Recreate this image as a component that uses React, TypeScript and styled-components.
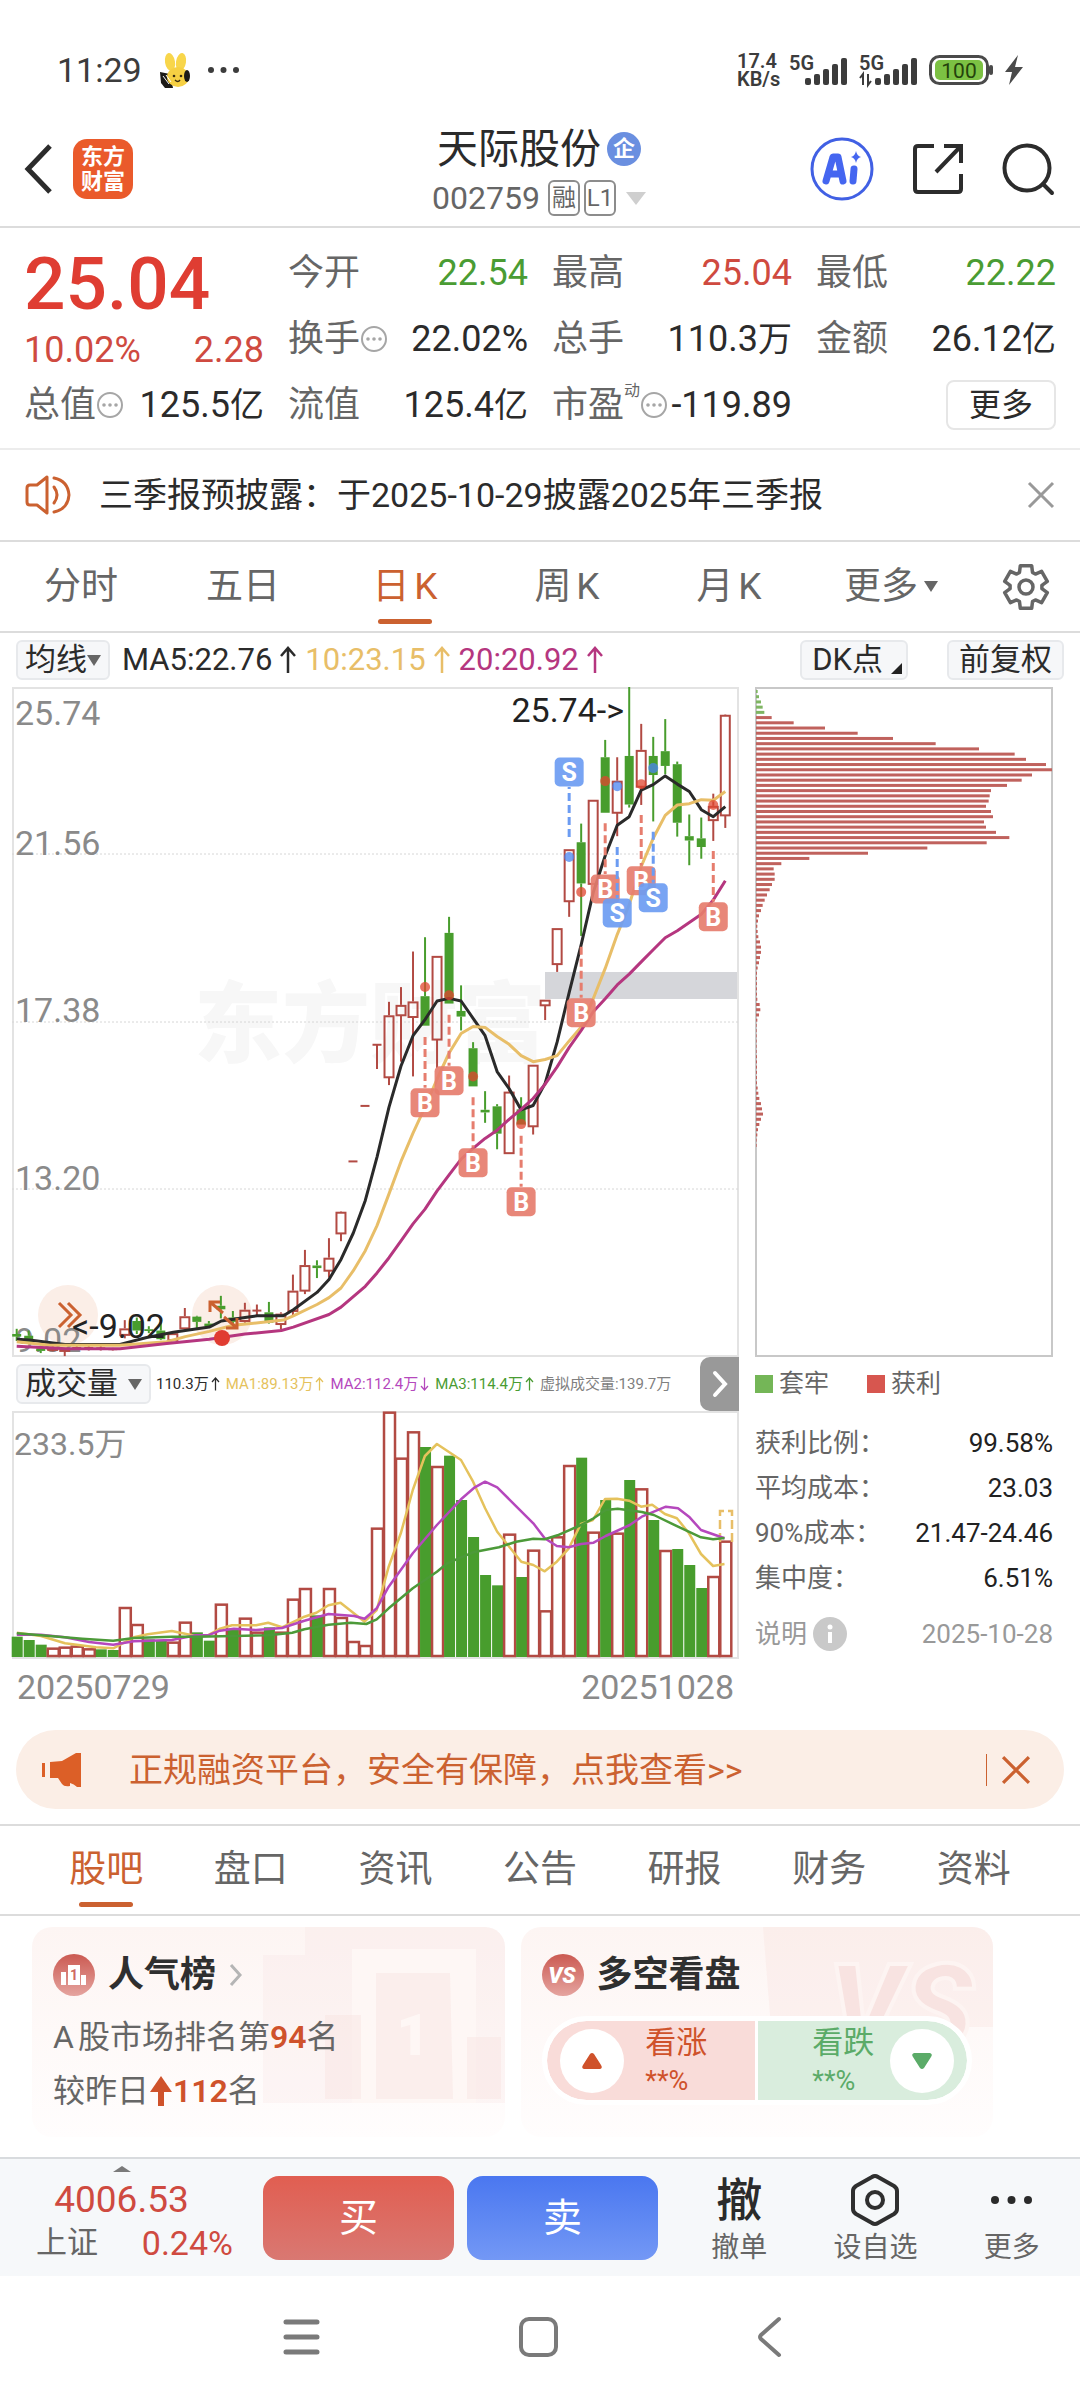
import React from "react";
import styled, { createGlobalStyle, css } from "styled-components";

const c = {
  text: "#2b2b2b",
  label: "#666",
  muted: "#8a8a8a",
  line: "#dcdcdc",
  orange: "#cb6130",
  red: "#cf4a40",
  green: "#4a9c33",
  candleRed: "#b24a43",
  candleGreen: "#489d2d",
  ma5: "#2a2a2a",
  ma10: "#e8be68",
  ma20: "#b5367f",
  violet: "#b548bd",
};

const Global = createGlobalStyle`
  * { box-sizing: border-box; }
  body {
    margin: 0;
    background: #fff;
    color: ${c.text};
    font-family: Roboto, "Noto Sans CJK SC", sans-serif;
  }
  button {
    margin: 0;
    padding: 0;
    border: 0;
    background: none;
    color: inherit;
    font: inherit;
    white-space: nowrap;
    cursor: pointer;
  }
  svg { display: block; flex: none; overflow: visible; }
`;

const Page = styled.div`
  display: flex;
  flex-direction: column;
  width: 100%;
`;

/* ---------- status bar ---------- */

const StatusBar = styled.div`
  display: flex;
  align-items: center;
  justify-content: space-between;
  height: 108px;
  padding: 32px 57px 0 57px;
  color: #3c3c3c;
`;

const StatusGroup = styled.div`
  display: flex;
  align-items: center;
  gap: ${(p: { $gap: number }) => p.$gap}px;
`;

const Clock = styled.span`
  font-size: 34px;
  line-height: 40px;
`;

const Speed = styled.span`
  display: flex;
  flex-direction: column;
  width: 42px;
  font-size: 20px;
  font-weight: 600;
  line-height: 18px;
`;

const RabbitIcon = () => (
  <svg width="32" height="36" viewBox="0 0 32 36">
    <path d="M1 20l10 2 3 14H6L2 31z" fill="#1c1a17" />
    <ellipse cx="11" cy="10" rx="5" ry="9" fill="#f8d64b" transform="rotate(-9 11 10)" />
    <ellipse cx="22" cy="10" rx="5" ry="9" fill="#f8d64b" transform="rotate(9 22 10)" />
    <ellipse cx="19" cy="25" rx="11" ry="10" fill="#f6d043" />
    <ellipse cx="28" cy="24" rx="3" ry="6" fill="#1c1a17" />
    <circle cx="15" cy="24" r="1.3" fill="#3a2c10" />
    <circle cx="22" cy="24" r="1.3" fill="#3a2c10" />
    <path d="M16 28q3 3 5 0" stroke="#3a2c10" strokeWidth="1.4" fill="none" />
    <path d="M4 24l6 8M7 23l5 7" stroke="#fff" strokeWidth="1" />
  </svg>
);

const DotsIcon = ({ size, r, fill }: { size: number; r: number; fill: string }) => (
  <svg width={size} height={r * 2 + 2} viewBox={`0 0 ${size} ${r * 2 + 2}`} fill={fill}>
    <circle cx={r} cy={r + 1} r={r} />
    <circle cx={size / 2} cy={r + 1} r={r} />
    <circle cx={size - r} cy={r + 1} r={r} />
  </svg>
);

const SignalIcon = ({ data }: { data?: boolean }) => (
  <svg width="60" height="34" viewBox="0 0 60 34" fill="#3c3c3c">
    <text x="0" y="17" fontSize="20" fontWeight="600" fontFamily="Roboto, sans-serif">
      5G
    </text>
    {[7, 11, 16, 21, 27].map((h, i) => (
      <rect key={h} x={16 + i * 9} y={32 - h} width="6" height={h} rx="2" />
    ))}
    {data && (
      <path d="M4 32V21L1 25M9 21v11l3-4" stroke="#3c3c3c" strokeWidth="2" fill="none" />
    )}
  </svg>
);

const BatteryIcon = () => (
  <svg width="66" height="30" viewBox="0 0 66 30">
    <rect x="1.5" y="1.5" width="57" height="27" rx="9" fill="none" stroke="#4a4a4a" strokeWidth="3" />
    <rect x="6" y="5" width="48" height="20" rx="5" fill="#7cc143" />
    <path d="M62 12v6" stroke="#4a4a4a" strokeWidth="4" strokeLinecap="round" />
    <text x="30" y="23" fontSize="21" textAnchor="middle" fill="#24420c" fontFamily="Roboto, sans-serif">
      100
    </text>
  </svg>
);

const BoltIcon = () => (
  <svg width="18" height="30" viewBox="0 0 18 30" fill="#4a4a4a">
    <path d="M13 0L0 17h7L4 30 18 12h-8z" />
  </svg>
);

/* ---------- header ---------- */

const Header = styled.header`
  display: grid;
  grid-template-columns: 1fr auto 1fr;
  align-items: center;
  height: 120px;
  padding: 4px 26px 0 24px;
  border-bottom: 2px solid ${c.line};
`;

const HeaderSide = styled.div`
  display: flex;
  align-items: center;
  gap: ${(p: { $gap: number; $end?: boolean }) => p.$gap}px;
  justify-content: ${(p) => (p.$end ? "flex-end" : "flex-start")};
`;

const Logo = styled.div`
  display: flex;
  flex-direction: column;
  justify-content: center;
  width: 60px;
  height: 60px;
  border-radius: 14px;
  background: #ea5a2b;
  color: #fff;
  font-size: 22px;
  font-weight: 700;
  line-height: 25px;
  text-align: center;
`;

const TitleBlock = styled.div`
  display: flex;
  flex-direction: column;
  align-items: center;
  padding-top: 8px;
`;

const TitleLine = styled.h1`
  display: flex;
  align-items: center;
  gap: 6px;
  margin: 0;
  font-size: 41px;
  font-weight: 400;
  line-height: 50px;
`;

const CompanyBadge = styled.span`
  width: 34px;
  height: 34px;
  border-radius: 50%;
  background: #6a8fe0;
  color: #fff;
  font-size: 22px;
  font-weight: 700;
  line-height: 33px;
  text-align: center;
`;

const CodeLine = styled.div`
  display: flex;
  align-items: center;
  gap: 4px;
  color: ${c.label};
  font-size: 32px;
  line-height: 48px;
`;

const Tag = styled.span`
  width: 32px;
  height: 36px;
  margin-left: ${(p: { $first?: boolean }) => (p.$first ? 4 : 0)}px;
  border: 2px solid #8c8c8c;
  border-radius: 6px;
  font-size: 24px;
  line-height: 32px;
  text-align: center;
`;

const Caret = styled.span<{ $w: number; $h: number; $color: string; $up?: boolean; $ml?: number }>`
  flex: none;
  width: 0;
  height: 0;
  margin-left: ${(p) => p.$ml ?? 0}px;
  border-left: ${(p) => p.$w / 2}px solid transparent;
  border-right: ${(p) => p.$w / 2}px solid transparent;
  ${(p) =>
    p.$up
      ? css`border-bottom: ${p.$h}px solid ${p.$color};`
      : css`border-top: ${p.$h}px solid ${p.$color};`}
`;

const BackIcon = () => (
  <svg width="28" height="50" viewBox="0 0 28 50" fill="none" stroke="#2c2c2c" strokeWidth="5">
    <path d="M26 2L4 25l22 23" />
  </svg>
);

const AiIcon = () => (
  <svg width="64" height="64" viewBox="0 0 64 64">
    <circle cx="32" cy="32" r="30" fill="#fff" stroke="#4160e4" strokeWidth="3" />
    <g fill="none" stroke="#4566f0" strokeWidth="7" strokeLinecap="round" strokeLinejoin="round">
      <path d="M16 44l7-24h5l5 24M20 37h11" />
      <path d="M44 32l-1 12" />
    </g>
    <path d="M46 14q1 5 5 6-4 1-5 6-1-5-5-6 4-1 5-6z" fill="#4566f0" />
  </svg>
);

const ShareIcon = () => (
  <svg width="52" height="52" viewBox="0 0 52 52" fill="none" stroke="#2c2c2c" strokeWidth="4">
    <path d="M22 3H6Q3 3 3 6v40q0 3 3 3h40q3 0 3-3V31" />
    <path d="M32 3h17v17M49 3L24 29" />
  </svg>
);

const SearchIcon = () => (
  <svg width="52" height="52" viewBox="0 0 52 52" fill="none" stroke="#2c2c2c" strokeWidth="4" strokeLinecap="round">
    <circle cx="25" cy="25" r="22.5" />
    <path d="M41 41l9 9" />
  </svg>
);

/* ---------- quote ---------- */

const Quote = styled.section`
  display: grid;
  grid-template-columns: repeat(4, 1fr);
  grid-auto-rows: 66px;
  column-gap: 24px;
  padding: 12px 24px 10px;
  border-bottom: 2px solid #ececec;
`;

const PriceBlock = styled.div`
  grid-row: span 2;
  display: flex;
  flex-direction: column;
  color: ${c.red};
`;

const Price = styled.strong`
  color: #df3d32;
  font-size: 73px;
  font-weight: 500;
  line-height: 88px;
`;

const Row = styled.div`
  display: flex;
  align-items: center;
  justify-content: space-between;
  white-space: nowrap;
`;

const QuoteValue = styled.span<{ $tone?: "up" | "down" }>`
  color: ${(p) => (p.$tone === "up" ? c.red : p.$tone === "down" ? c.green : c.text)};
  font-size: 36px;
  line-height: 44px;
`;

const Unit = styled.span`
  font-size: 34px;
`;

const QuoteLabel = styled.span`
  display: flex;
  align-items: center;
  color: ${c.label};
  font-size: 36px;
  line-height: 44px;
`;

const Mode = styled.sup`
  align-self: flex-start;
  font-size: 16px;
  line-height: 16px;
`;

const MoreBox = styled.button`
  align-self: center;
  justify-self: end;
  width: 110px;
  height: 50px;
  border: 2px solid #e6e6e6;
  border-radius: 8px;
  font-size: 32px;
  line-height: 44px;
`;

const HintIcon = () => (
  <svg width="28" height="28" viewBox="0 0 28 28">
    <circle cx="14" cy="14" r="12" fill="none" stroke="#a6a6a6" strokeWidth="2" />
    <g fill="#a6a6a6">
      <circle cx="8" cy="14" r="1.8" />
      <circle cx="14" cy="14" r="1.8" />
      <circle cx="20" cy="14" r="1.8" />
    </g>
  </svg>
);

type Cell = {
  label: string;
  value: string;
  unit?: string;
  tone?: "up" | "down";
  hint?: boolean;
  mode?: string;
};

const QuoteCell = ({ label, value, unit, tone, hint, mode }: Cell) => (
  <Row>
    <QuoteLabel>
      {label}
      {mode && <Mode>{mode}</Mode>}
      {hint && <HintIcon />}
    </QuoteLabel>
    <QuoteValue $tone={tone}>
      {value}
      {unit && <Unit>{unit}</Unit>}
    </QuoteValue>
  </Row>
);

/* ---------- notice ---------- */

const Notice = styled.section`
  display: flex;
  align-items: center;
  gap: 27px;
  height: 92px;
  padding: 0 26px;
  border-bottom: 2px solid ${c.line};
  font-size: 34px;
  line-height: 44px;
`;

const Grow = styled.span`
  flex: 1;
`;

const SpeakerIcon = () => (
  <svg width="46" height="40" viewBox="0 0 46 40" fill="none" stroke={c.orange} strokeWidth="3" strokeLinecap="round" strokeLinejoin="round">
    <path d="M21 2L11 10H4q-3 0-3 3v14q0 3 3 3h7l10 8z" />
    <path d="M28 12q6 8 0 16" />
    <path d="M28 3q14 3 15 17-1 14-15 17" />
  </svg>
);

const CloseIcon = ({ size, color }: { size: number; color: string }) => (
  <svg width={size} height={size} viewBox="0 0 26 26" stroke={color} strokeWidth="3">
    <path d="M1 1l24 24M25 1L1 25" />
  </svg>
);

/* ---------- tabs ---------- */

const Tabs = styled.nav<{ $info?: boolean }>`
  display: flex;
  height: ${(p) => (p.$info ? 92 : 91)}px;
  padding: 0 ${(p) => (p.$info ? 34 : 0)}px;
  border-top: ${(p) => (p.$info ? 2 : 0)}px solid ${c.line};
  border-bottom: 2px solid ${c.line};
`;

const Tab = styled.button<{ $active?: boolean }>`
  position: relative;
  flex: 1;
  display: flex;
  align-items: center;
  justify-content: center;
  color: ${(p) => (p.$active ? c.orange : c.label)};
  font-size: 37px;
  line-height: 48px;
  text-autospace: normal;
  ${(p) =>
    p.$active &&
    css`
      &::after {
        content: "";
        position: absolute;
        bottom: 7px;
        left: calc(50% - 27px);
        width: 54px;
        height: 5px;
        border-radius: 3px;
        background: ${c.orange};
      }
    `}
`;

const GearButton = styled.button`
  display: flex;
  align-items: center;
  justify-content: center;
  width: 108px;
`;

const gearOutline = [0, 60, 120, 180, 240, 300]
  .flatMap((deg) =>
    [[16, -24], [22, -15], [22, 15], [16, 24]].map(([r, d]) => {
      const a = ((deg + d - 90) * Math.PI) / 180;
      return `${(23 + r * Math.cos(a)).toFixed(1)},${(24 + r * Math.sin(a)).toFixed(1)}`;
    }),
  )
  .join(" ");

const GearIcon = () => (
  <svg width="46" height="48" viewBox="0 0 46 48" fill="none" stroke="#666" strokeWidth="3.500" strokeLinejoin="round">
    <polygon points={gearOutline} />
    <circle cx="23" cy="24" r="7" />
  </svg>
);

/* ---------- indicator bar ---------- */

const IndicatorBar = styled.div`
  display: flex;
  align-items: center;
  gap: 12px;
  height: 54px;
  padding: 0 16px;
`;

const Chip = styled.button<{ $wide?: boolean }>`
  flex: none;
  display: flex;
  align-items: center;
  height: 40px;
  padding: 0 ${(p) => (p.$wide ? 10 : 7)}px;
  border: 2px solid #e7e9ec;
  border-radius: 6px;
  background: #f6f7f9;
  font-size: 31px;
  line-height: 36px;
`;

const ChipGroup = styled.div`
  display: flex;
  gap: 39px;
`;

const Corner = styled.span`
  align-self: flex-end;
  width: 0;
  height: 0;
  margin: 0 -6px 4px 8px;
  border-bottom: 11px solid #222;
  border-left: 11px solid transparent;
`;

const Readings = styled.div`
  flex: 1;
  display: flex;
  gap: 8px;
  font-size: 31px;
  line-height: 40px;
`;

const Reading = styled.span<{ $color: string; $gap?: number }>`
  display: flex;
  align-items: center;
  gap: ${(p) => p.$gap ?? 7}px;
  color: ${(p) => p.$color};
  white-space: nowrap;
`;

const Arrow = ({ down, w = 18, h = 28 }: { down?: boolean; w?: number; h?: number }) => (
  <svg width={w} height={h} viewBox="0 0 18 28" fill="none" stroke="currentColor" strokeWidth="2.500">
    <path d={down ? "M9 1v25M2 18l7 8 7-8" : "M9 27V2M2 10l7-8 7 8"} />
  </svg>
);

/* ---------- charts ---------- */

const Charts = styled.section`
  display: grid;
  grid-template-columns: 727fr 298fr;
  column-gap: 16px;
  padding: 0 27px 0 12px;
`;

const Column = styled.div`
  display: flex;
  flex-direction: column;
  min-width: 0;
`;

const Plot = styled.svg`
  width: 100%;
  height: auto;
`;

const VolumeBar = styled.div`
  display: flex;
  align-items: center;
  gap: 5px;
  height: 54px;
  padding-left: 4px;
`;

const VolumeReadings = styled.div`
  flex: 1;
  display: flex;
  gap: 6px;
  font-size: 15px;
  line-height: 24px;
`;

const Expand = styled.button`
  flex: none;
  display: flex;
  align-items: center;
  justify-content: center;
  width: 39px;
  height: 54px;
  border-radius: 10px 0 0 10px;
  background: #999;
`;

const DateRow = styled.div`
  display: flex;
  justify-content: space-between;
  padding: 0 5px;
  color: ${c.muted};
  font-size: 34px;
  line-height: 56px;
`;

const Legend = styled.div`
  display: flex;
  align-items: center;
  gap: 38px;
  height: 54px;
  color: ${c.label};
  font-size: 25px;
  line-height: 36px;
`;

const LegendItem = styled.span`
  display: flex;
  align-items: center;
  gap: 6px;
`;

const Swatch = styled.i<{ $color: string }>`
  width: 18px;
  height: 18px;
  background: ${(p) => p.$color};
`;

const Costs = styled.dl`
  margin: 0;
  padding-top: 9px;
  font-size: 26px;
  line-height: 36px;
`;

const CostRow = styled.div`
  display: flex;
  align-items: center;
  justify-content: space-between;
  height: 45px;
  white-space: nowrap;
  dt { color: ${c.label}; }
  dd { margin: 0; color: #222; }
`;

const CostFoot = styled.div`
  display: flex;
  align-items: center;
  justify-content: space-between;
  height: 68px;
  color: #999;
  font-size: 26px;
  line-height: 36px;
`;

const Explain = styled.button`
  display: flex;
  align-items: center;
  gap: 6px;
`;

// Vertical plot units run from the top edge (16) to the bottom edge (1559).
const UNIT = 2.306;
const ky = (v: number) => (v - 16) / UNIT;
const kx = (i: number) => 4.7 + i * 12.01;

type Candle = ["r" | "g", number, number, number, number];

const candles: Candle[] = [
  ["g", 1496, 1508, 1514, 1524], ["g", 1500, 1512, 1528, 1530], ["g", 1535, 1541, 1547, 1552],
  ["r", 1536, 1540, 1544, 1548], ["r", 1540, 1542, 1547, 1559], ["r", 1536, 1540, 1540, 1544],
  ["r", 1536, 1540, 1540, 1546], ["r", 1536, 1541, 1541, 1546], ["r", 1540, 1543, 1543, 1546],
  ["r", 1476, 1495, 1510, 1518], ["g", 1470, 1478, 1500, 1508], ["g", 1490, 1497, 1501, 1506],
  ["g", 1482, 1500, 1520, 1522], ["r", 1502, 1506, 1522, 1524], ["r", 1448, 1467, 1495, 1498],
  ["g", 1466, 1468, 1480, 1494], ["g", 1478, 1484, 1490, 1494], ["g", 1420, 1443, 1451, 1472],
  ["g", 1455, 1470, 1480, 1496], ["r", 1436, 1452, 1478, 1482], ["r", 1440, 1454, 1454, 1466],
  ["g", 1434, 1458, 1482, 1484], ["r", 1458, 1461, 1485, 1498], ["r", 1371, 1408, 1455, 1468],
  ["r", 1314, 1349, 1408, 1416], ["g", 1338, 1350, 1356, 1379], ["r", 1287, 1332, 1362, 1378],
  ["r", 1225, 1226, 1276, 1294], ["r", 1110, 1110, 1110, 1110], ["r", 982, 982, 982, 982],
  ["r", 841, 841, 841, 897], ["r", 742, 773, 916, 934], ["r", 708, 749, 773, 880],
  ["r", 626, 741, 777, 914], ["g", 593, 729, 797, 797], ["r", 636, 636, 829, 895],
  ["g", 546, 583, 746, 746], ["g", 704, 763, 776, 808], ["g", 835, 849, 937, 937],
  ["g", 948, 991, 997, 1021], ["g", 978, 983, 1046, 1082], ["r", 912, 949, 1091, 1091],
  ["g", 962, 990, 1025, 1025], ["r", 887, 887, 1029, 1048], ["r", 737, 737, 750, 784],
  ["r", 572, 572, 655, 673], ["r", 390, 390, 510, 546], ["g", 331, 374, 469, 590],
  ["r", 276, 276, 470, 470], ["g", 138, 178, 306, 306], ["r", 178, 232, 306, 360],
  ["g", 16, 175, 287, 294], ["r", 101, 161, 246, 288], ["g", 131, 175, 219, 326],
  ["g", 90, 164, 198, 217], ["g", 188, 194, 329, 361], ["g", 310, 360, 370, 427],
  ["g", 317, 365, 385, 412], ["r", 262, 290, 323, 371], ["r", 79, 80, 312, 341],
];

type Point = [number, number];
// Averages from the 31st bar on carry one value per bar.
const tail = (values: number[]): Point[] => values.map((v, k) => [1131 + k * 36.03, v]);

const ma5: Point[] = [
  [50, 1520], [88, 1522], [195, 1532], [360, 1532], [440, 1516], [520, 1504], [628, 1492], [664, 1478],
  [735, 1470], [771, 1466], [850, 1466], [880, 1452], [951, 1412], [987, 1382], [1023, 1336], [1060, 1275],
  [1096, 1200],
  ...tail([1100, 985, 890, 820, 783, 740, 734, 740, 780, 820, 903, 942, 991, 981, 930, 835, 720, 610, 490, 405, 335, 315, 254, 241, 221, 240, 257, 299, 315, 292]),
];
const ma10: Point[] = [
  [50, 1526], [150, 1534], [360, 1534], [500, 1526], [556, 1514], [628, 1502], [700, 1488], [850, 1476],
  [880, 1466], [951, 1440], [987, 1424], [1023, 1402], [1060, 1362], [1096, 1316],
  ...tail([1258, 1185, 1110, 1045, 985, 920, 860, 815, 799, 801, 822, 840, 866, 880, 875, 866, 832, 800, 735, 665, 587, 518, 430, 365, 312, 288, 285, 276, 277, 257]),
];
const ma20: Point[] = [
  [50, 1536], [200, 1542], [360, 1542], [500, 1530], [628, 1520], [735, 1508], [844, 1500], [880, 1492],
  [987, 1463], [1023, 1446], [1096, 1398],
  ...tail([1367, 1332, 1293, 1254, 1220, 1178, 1141, 1105, 1080, 1057, 1038, 1013, 990, 965, 932, 892, 847, 808, 765, 735, 703, 678, 650, 622, 594, 578, 559, 540, 507, 463]),
];

const priceLine = (pts: Point[]) =>
  pts.map(([x, y]) => `${((x - 36) / 3).toFixed(1)},${ky(y).toFixed(1)}`).join(" ");

type Trade = { i: number; kind: "B" | "S"; dot: number; from: number; box: number };
const trades: Trade[] = [
  { i: 34, kind: "B", dot: 708, from: 823, box: 975 },
  { i: 36, kind: "B", dot: 727, from: 772, box: 924 },
  { i: 38, kind: "B", dot: 914, from: 962, box: 1113 },
  { i: 42, kind: "B", dot: 1024, from: 1051, box: 1203 },
  { i: 46, kind: "S", dot: 408, from: 362, box: 212 },
  { i: 47, kind: "B", dot: 489, from: 615, box: 767 },
  { i: 49, kind: "B", dot: 233, from: 330, box: 482 },
  { i: 50, kind: "S", dot: 245, from: 385, box: 537 },
  { i: 52, kind: "B", dot: 240, from: 311, box: 463 },
  { i: 53, kind: "S", dot: 203, from: 350, box: 502 },
  { i: 58, kind: "B", dot: 288, from: 394, box: 546 },
];

const numFont = 'Roboto, "Noto Sans CJK SC", sans-serif';

const CandleMark = ({ d, i }: { d: Candle; i: number }) => {
  const [kind, high, top, bottom, low] = d;
  const x = kx(i);
  const red = kind === "r";
  const color = red ? c.candleRed : c.candleGreen;
  const flat = bottom === top;
  return (
    <g stroke={color} strokeWidth="2">
      {high < top && <line x1={x} x2={x} y1={ky(high)} y2={ky(top)} />}
      {low > bottom && <line x1={x} x2={x} y1={ky(bottom)} y2={ky(low)} />}
      {flat ? (
        <line x1={x - 4.5} x2={x + 4.5} y1={ky(top)} y2={ky(top)} />
      ) : red ? (
        <rect x={x - 4.5} y={ky(top) + 1} width="9" height={Math.max(1, ky(bottom) - ky(top) - 1)} fill="none" />
      ) : (
        <rect x={x - 4.5} y={ky(top)} width="9" height={ky(bottom) - ky(top)} fill={color} stroke="none" />
      )}
    </g>
  );
};

const PriceChart = () => (
  <Plot viewBox="0 0 727 670" fontFamily={numFont}>
    <text x="182" y="368" fontSize="88" fontWeight="900" fill="#f7f7f7">
      东方财富
    </text>
    <rect x="533" y="285" width="194" height="27" fill="#d5d6da" />
    <rect x="1" y="1" width="725" height="668" fill="none" stroke="#e3e3e3" strokeWidth="2" />
    {[167, 335, 502].map((y) => (
      <line key={y} x1="0" x2="727" y1={y} y2={y} stroke="#d6d6d6" strokeDasharray="2 2" />
    ))}
    <circle cx="56" cy="628" r="30" fill="#fbeee7" />
    <circle cx="210" cy="628" r="30" fill="#fbeee7" />
    <g fontSize="34" fill={c.muted}>
      <text x="3" y="38">25.74</text>
      <text x="3" y="168">21.56</text>
      <text x="3" y="335">17.38</text>
      <text x="3" y="503">13.20</text>
      <text x="3" y="665">9.02</text>
    </g>
    {candles.map((d, i) => (
      <CandleMark key={i} d={d} i={i} />
    ))}
    <g fill="none" strokeWidth="3" strokeLinejoin="round">
      <polyline points={priceLine(ma5)} stroke={c.ma5} />
      <polyline points={priceLine(ma10)} stroke={c.ma10} />
      <polyline points={priceLine(ma20)} stroke={c.ma20} />
    </g>
    <g fill="none" stroke={c.orange} strokeWidth="3">
      <path d="M47 616l12 12-12 12M56 616l12 12-12 12" />
      <path d="M198 625v-10h10M198 615l13 11M225 631v10h-11M225 641l-13-11" />
    </g>
    <circle cx="210" cy="651" r="8" fill="#e03c31" />
    {trades.map((t) => {
      const x = kx(t.i);
      const color = t.kind === "B" ? "#e67d6e" : "#6c9cf2";
      const above = t.box < t.dot;
      return (
        <g key={t.i}>
          <circle cx={x} cy={ky(t.dot)} r="5" fill={t.kind === "B" ? "#e0462f" : "#4a84f0"} fillOpacity="0.75" />
          <line
            x1={x}
            x2={x}
            y1={ky(t.from)}
            y2={ky(t.box) + (above ? 15 : -15)}
            stroke={color}
            strokeWidth="3"
            strokeDasharray="8 4"
          />
          <rect x={x - 14.5} y={ky(t.box) - 14.5} width="29" height="29" rx="5" fill={color} fillOpacity="0.92" />
          <text x={x} y={ky(t.box) + 9} fontSize="25" fontWeight="700" textAnchor="middle" fill="#fff">
            {t.kind}
          </text>
        </g>
      );
    })}
    <g fontSize="34" fill="#222">
      <text x="612" y="35" textAnchor="end">25.74-&gt;</text>
      <text x="60" y="651">&lt;-9.02</text>
    </g>
  </Plot>
);

const volumes: Array<["r" | "g", number]> = [
  ["g", 860], ["g", 870], ["g", 884], ["r", 896], ["r", 893], ["r", 890], ["r", 898], ["g", 898], ["g", 900],
  ["r", 774], ["r", 825], ["g", 868], ["g", 870], ["r", 878], ["r", 818], ["g", 847], ["g", 872], ["r", 764],
  ["g", 836], ["r", 806], ["r", 848], ["g", 832], ["r", 848], ["r", 749], ["r", 717], ["g", 796], ["r", 717],
  ["r", 804], ["r", 876], ["r", 888], ["r", 536], ["r", 188], ["r", 326], ["r", 247], ["g", 291], ["r", 351],
  ["g", 317], ["g", 450], ["g", 561], ["g", 675], ["g", 706], ["r", 554], ["g", 681], ["r", 602], ["r", 784],
  ["r", 562], ["r", 348], ["g", 323], ["r", 548], ["g", 450], ["r", 551], ["g", 390], ["r", 418], ["g", 510],
  ["r", 603], ["g", 597], ["g", 645], ["g", 714], ["r", 681], ["r", 575],
];

const vol1: Point[] = [
  [50, 848], [120, 858], [190, 880], [280, 892], [330, 895], [390, 862], [430, 853], [500, 843], [570, 858],
  [605, 856], [640, 836], [675, 826], [745, 826], [780, 818], [820, 832], [885, 800], [920, 788], [955, 766],
  [990, 758], [1060, 815], [1095, 780], [1130, 650], [1165, 550], [1200, 420], [1235, 318], [1270, 282],
  [1340, 330], [1375, 395], [1410, 475], [1445, 545], [1480, 590], [1515, 635], [1550, 645], [1583, 664],
  [1618, 635], [1653, 595], [1688, 522], [1723, 510], [1758, 447], [1793, 446], [1828, 452], [1863, 470],
  [1895, 464], [1932, 492], [1967, 505], [2002, 550], [2037, 612], [2072, 648], [2105, 642],
];
const vol2: Point[] = [
  [50, 854], [120, 854], [190, 862], [260, 876], [330, 884], [390, 874], [500, 870], [570, 856], [605, 856],
  [640, 842], [680, 836], [745, 840], [820, 834], [885, 812], [955, 792], [1030, 798], [1060, 806],
  [1095, 775], [1130, 710], [1200, 610], [1270, 525], [1340, 448], [1380, 412], [1410, 395], [1445, 412],
  [1480, 448], [1550, 520], [1583, 565], [1618, 588], [1653, 592], [1688, 582], [1725, 578], [1760, 558],
  [1830, 525], [1865, 500], [1900, 485], [1935, 470], [1970, 475], [2002, 500], [2037, 540], [2105, 565],
];
const vol3: Point[] = [
  [50, 850], [120, 856], [240, 866], [330, 872], [390, 864], [500, 860], [570, 860], [680, 858], [780, 856],
  [850, 848], [885, 838], [955, 824], [1020, 818], [1065, 822], [1095, 808], [1130, 775], [1200, 715],
  [1270, 665], [1300, 640], [1340, 622], [1375, 607], [1450, 592], [1500, 575], [1550, 566], [1583, 568],
  [1620, 556], [1688, 525], [1725, 505], [1760, 480], [1795, 476], [1865, 486], [1900, 495], [1970, 530],
  [2037, 562], [2072, 568], [2105, 564],
];

const vy = (v: number) => (v - 183) / 3;
const volumeLine = (pts: Point[]) =>
  pts.map(([x, y]) => `${((x - 36) / 2.904).toFixed(1)},${vy(y).toFixed(1)}`).join(" ");

const VolumeChart = () => (
  <Plot viewBox="0 0 727 248" fontFamily={numFont}>
    <rect x="1" y="1" width="725" height="246" fill="none" stroke="#e3e3e3" strokeWidth="2" />
    <text x="2" y="44" fontSize="32" fill={c.muted}>
      233.5万
    </text>
    {volumes.map(([kind, top], i) => {
      const x = 5.2 + i * 12.01;
      return kind === "r" ? (
        <rect key={i} x={x - 5.5} y={vy(top)} width="11" height={245 - vy(top)} fill="#fff" stroke={c.candleRed} strokeWidth="2.500" />
      ) : (
        <rect key={i} x={x - 5.5} y={vy(top)} width="11" height={246 - vy(top)} fill={c.candleGreen} />
      );
    })}
    <path d="M708 131V100h12v31" fill="none" stroke={c.ma10} strokeWidth="2.500" strokeDasharray="9 4" />
    <g fill="none" strokeWidth="2.500" strokeLinejoin="round">
      <polyline points={volumeLine(vol1)} stroke="#e5c25c" />
      <polyline points={volumeLine(vol2)} stroke={c.violet} />
      <polyline points={volumeLine(vol3)} stroke="#4c9a39" />
    </g>
  </Plot>
);

const trapped = [5, 9, 15, 20, 25];
const profit = [
  47, 113, 207, 305, 411, 539, 669, 776, 810, 870, 888, 828, 797, 753, 705, 701, 698, 690, 705, 711, 684, 690,
  720, 760, 692, 514, 336, 160, 76, 53, 56, 56, 48, 41, 33, 26, 20, 15, 9, 6, 4, 5, 7, 12, 15, 15, 12, 9, 5, 3,
  3, 3, 3, 3, 4, 11, 13, 9, 4, 2, 2, 2, 2, 2, 2, 3, 3, 3, 3, 3, 3, 5, 7, 10, 15, 18, 21, 15, 10, 6, 4, 2, 2,
];

const ChipChart = () => (
  <Plot viewBox="0 0 298 670">
    <rect x="1" y="1" width="296" height="668" fill="none" stroke="#c8c8c8" strokeWidth="2" />
    {[...trapped, ...profit].map((w, k) => (
      <rect key={k} x="1" y={3 + k * 5.217} width={w / 3} height="3" fill={k < 5 ? "#7fb562" : "#c0625d"} />
    ))}
  </Plot>
);

/* ---------- promo ---------- */

const Promo = styled.section`
  display: flex;
  align-items: center;
  height: 79px;
  margin: 15px 16px;
  padding: 0 34px 0 26px;
  border-radius: 40px;
  background: #fbeee6;
  color: ${c.orange};
  font-size: 34px;
  line-height: 44px;
`;

const PromoLink = styled.a`
  flex: 1;
  margin-left: 45px;
  color: inherit;
  text-decoration: none;
`;

const PromoClose = styled.button`
  display: flex;
  padding: 2px 0 2px 15px;
  border-left: 1px solid ${c.orange};
`;

const HornIcon = () => (
  <svg width="42" height="36" viewBox="0 0 42 36" fill="#dc5f27">
    <path d="M0 11h3v14H0zM8 10L20 9l14-8h5v34h-4q-3-3-7-4v3q-6 1-8-2l-4-6H8z" />
  </svg>
);

/* ---------- cards ---------- */

const Cards = styled.section`
  display: grid;
  grid-template-columns: 1fr 1fr;
  gap: 16px;
  padding: 11px 87px 20px 32px;
`;

const Card = styled.article`
  position: relative;
  display: flex;
  flex-direction: column;
  height: 210px;
  padding: 23px 21px 0;
  overflow: hidden;
  border-radius: 20px;
  background: linear-gradient(#fdf5f3, #fffdfd);
`;

const CardArt = styled.svg`
  position: absolute;
  top: 0;
  right: 0;
`;

const CardTitle = styled.h2`
  position: relative;
  display: flex;
  align-items: center;
  gap: 13px;
  margin: 0;
  color: #2f2f2f;
  font-size: 36px;
  font-weight: 700;
  line-height: 50px;
`;

const CardText = styled.p`
  position: relative;
  display: flex;
  align-items: center;
  margin: ${(p: { $top: number }) => p.$top}px 0 0;
  color: ${c.label};
  font-size: 32px;
  line-height: 44px;
  text-autospace: normal;
`;

const Strong = styled.b`
  color: #cf522b;
  font-weight: 600;
`;

const Vote = styled.div`
  position: relative;
  display: grid;
  grid-template-columns: 1fr 1fr;
  gap: 3px;
  height: 89px;
  margin-top: 16px;
  border: 5px solid #fff;
  border-radius: 45px;
  background: #fff;
  overflow: hidden;
`;

const VoteSide = styled.button<{ $up?: boolean }>`
  display: flex;
  align-items: center;
  justify-content: space-between;
  flex-direction: ${(p) => (p.$up ? "row" : "row-reverse")};
  gap: 14px;
  padding: ${(p) => (p.$up ? "0 48px 0 13px" : "0 13px 0 54px")};
  border-radius: ${(p) => (p.$up ? "40px 0 0 40px" : "0 40px 40px 0")};
  background: ${(p) => (p.$up ? "#f9dcd9" : "#d9eddd")};
  color: ${(p) => (p.$up ? "#cf522b" : "#5bab68")};
`;

const VoteDisc = styled.span`
  display: flex;
  align-items: center;
  justify-content: center;
  width: 64px;
  height: 64px;
  border-radius: 50%;
  background: #fff;
`;

const VoteText = styled.span`
  display: flex;
  flex-direction: column;
  font-size: 31px;
  line-height: 40px;
  text-align: left;
`;

const VoteShare = styled.span`
  font-size: 27px;
  line-height: 36px;
`;

const RankIcon = () => (
  <svg width="42" height="42" viewBox="0 0 42 42">
    <defs>
      <linearGradient id="disc" x1="0" y1="0" x2="0" y2="1">
        <stop offset="0" stopColor="#cb5a52" />
        <stop offset="1" stopColor="#e5a49f" />
      </linearGradient>
    </defs>
    <circle cx="21" cy="21" r="21" fill="url(#disc)" />
    <path d="M8 18h5v13H8zM15 11h12v20H15zM28 21h5v10h-5z" fill="#fff" />
    <text x="21" y="26" fontSize="14" fontWeight="700" textAnchor="middle" fill="#cf6a62" fontFamily="Roboto, sans-serif">
      1
    </text>
  </svg>
);

const VsIcon = () => (
  <svg width="42" height="42" viewBox="0 0 42 42">
    <circle cx="21" cy="21" r="21" fill="url(#disc)" />
    <text x="20" y="29" fontSize="22" fontWeight="900" fontStyle="italic" textAnchor="middle" fill="#fff" fontFamily="Roboto, sans-serif">
      VS
    </text>
  </svg>
);

const ChevronIcon = () => (
  <svg width="14" height="22" viewBox="0 0 14 22" fill="none" stroke="#b5b5b5" strokeWidth="3">
    <path d="M2 1l9 10-9 10" />
  </svg>
);

const UpIcon = () => (
  <svg width="24" height="30" viewBox="0 0 24 30" fill="#cf522b">
    <path d="M12 0l11 16h-8v14H9V16H1z" />
  </svg>
);

const TriangleIcon = ({ down }: { down?: boolean }) => (
  <svg width="22" height="18" viewBox="0 0 22 18" fill={down ? "#5bab68" : "#cf522b"}>
    <path d={down ? "M3 1h16q3 1 1 4l-7 11q-2 2-4 0L2 5Q0 2 3 1z" : "M9 2q2-2 4 0l7 11q2 3-1 4H3q-3-1-1-4z"} />
  </svg>
);

/* ---------- trade bar ---------- */

const TradeBar = styled.footer`
  display: grid;
  grid-template-columns: 250px 191px 191px 1fr;
  column-gap: 13px;
  align-items: center;
  height: 119px;
  border-top: 2px solid #d8dbde;
  background: #f6f8fa;
`;

const IndexBox = styled.div`
  display: flex;
  flex-direction: column;
  align-self: start;
  padding: 7px 17px 0 36px;
`;

const IndexTop = styled.div`
  display: flex;
  flex-direction: column;
  align-items: center;
  gap: 6px;
  padding-right: 26px;
`;

const IndexValue = styled.span`
  color: ${c.red};
  font-size: 37px;
  line-height: 44px;
`;

const IndexRow = styled.div`
  display: flex;
  justify-content: space-between;
  color: ${c.label};
  font-size: 31px;
  line-height: 42px;
`;

const IndexChange = styled.span`
  color: ${c.red};
  font-size: 34px;
`;

const TradeButton = styled.button<{ $sell?: boolean }>`
  height: 84px;
  border-radius: 16px;
  background: ${(p) =>
    p.$sell ? "linear-gradient(#4a77f0, #7398f5)" : "linear-gradient(#e15e51, #d97872)"};
  color: #fff;
  font-size: 39px;
  line-height: 84px;
`;

const Tools = styled.div`
  display: grid;
  grid-template-columns: repeat(3, 1fr);
`;

const Tool = styled.button`
  display: flex;
  flex-direction: column;
  align-items: center;
  color: ${c.label};
  font-size: 28px;
  line-height: 36px;
`;

const ToolIcon = styled.span`
  display: flex;
  align-items: center;
  height: 60px;
  color: #2b2b2b;
  font-size: 46px;
  font-weight: 500;
  line-height: 56px;
`;

const HexIcon = () => (
  <svg width="48" height="52" viewBox="0 0 48 52" fill="none" stroke="#2f2f2f" strokeWidth="4" strokeLinejoin="round">
    <path d="M21 3q3-2 6 0l16 9q3 2 3 5v18q0 3-3 5l-16 9q-3 2-6 0L5 40q-3-2-3-5V17q0-3 3-5z" />
    <circle cx="24" cy="26" r="8" />
  </svg>
);

/* ---------- system navigation ---------- */

const SystemNav = styled.nav`
  display: flex;
  align-items: center;
  justify-content: center;
  gap: 199px;
  height: 122px;
  padding-right: 16px;
`;

const chartTabs = ["分时", "五日", "日K", "周K", "月K"];
const infoTabs = ["股吧", "盘口", "资讯", "公告", "研报", "财务", "资料"];
const costs = [
  ["获利比例：", "99.58%"],
  ["平均成本：", "23.03"],
  ["90%成本：", "21.47-24.46"],
  ["集中度：", "6.51%"],
];

export default function App() {
  return (
    <Page>
      <Global />
      <StatusBar>
        <StatusGroup $gap={17}>
          <Clock>11:29</Clock>
          <RabbitIcon />
          <DotsIcon size={31} r={3} fill="#3c3c3c" />
        </StatusGroup>
        <StatusGroup $gap={10}>
          <Speed>
            <span>17.4</span>
            <span>KB/s</span>
          </Speed>
          <SignalIcon />
          <SignalIcon data />
          <BatteryIcon />
          <BoltIcon />
        </StatusGroup>
      </StatusBar>

      <Header>
        <HeaderSide $gap={21}>
          <button aria-label="返回">
            <BackIcon />
          </button>
          <Logo>
            <span>东方</span>
            <span>财富</span>
          </Logo>
        </HeaderSide>
        <TitleBlock>
          <TitleLine>
            天际股份<CompanyBadge>企</CompanyBadge>
          </TitleLine>
          <CodeLine>
            002759
            <Tag $first>融</Tag>
            <Tag>L1</Tag>
            <Caret $w={20} $h={13} $color="#cfcfcf" $ml={6} />
          </CodeLine>
        </TitleBlock>
        <HeaderSide $gap={38} $end>
          <button aria-label="智能助手">
            <AiIcon />
          </button>
          <button aria-label="分享">
            <ShareIcon />
          </button>
          <button aria-label="搜索">
            <SearchIcon />
          </button>
        </HeaderSide>
      </Header>

      <Quote>
        <PriceBlock>
          <Price>25.04</Price>
          <Row>
            <QuoteValue $tone="up">10.02%</QuoteValue>
            <QuoteValue $tone="up">2.28</QuoteValue>
          </Row>
        </PriceBlock>
        <QuoteCell label="今开" value="22.54" tone="down" />
        <QuoteCell label="最高" value="25.04" tone="up" />
        <QuoteCell label="最低" value="22.22" tone="down" />
        <QuoteCell label="换手" value="22.02%" hint />
        <QuoteCell label="总手" value="110.3" unit="万" />
        <QuoteCell label="金额" value="26.12" unit="亿" />
        <QuoteCell label="总值" value="125.5" unit="亿" hint />
        <QuoteCell label="流值" value="125.4" unit="亿" />
        <QuoteCell label="市盈" mode="动" value="-119.89" hint />
        <MoreBox>更多</MoreBox>
      </Quote>

      <Notice>
        <SpeakerIcon />
        <Grow>三季报预披露：于2025-10-29披露2025年三季报</Grow>
        <button aria-label="关闭公告">
          <CloseIcon size={26} color="#999" />
        </button>
      </Notice>

      <Tabs>
        {chartTabs.map((t) => (
          <Tab key={t} $active={t === "日K"}>
            {t}
          </Tab>
        ))}
        <Tab>
          更多
          <Caret $w={14} $h={11} $color="#666" $ml={6} />
        </Tab>
        <GearButton aria-label="设置">
          <GearIcon />
        </GearButton>
      </Tabs>

      <IndicatorBar>
        <Chip>
          均线
          <Caret $w={14} $h={11} $color="#666" />
        </Chip>
        <Readings>
          <Reading $color={c.text}>
            MA5:22.76
            <Arrow />
          </Reading>
          <Reading $color={c.ma10}>
            10:23.15
            <Arrow />
          </Reading>
          <Reading $color={c.ma20}>
            20:20.92
            <Arrow />
          </Reading>
        </Readings>
        <ChipGroup>
          <Chip $wide>
            DK点
            <Corner />
          </Chip>
          <Chip $wide>前复权</Chip>
        </ChipGroup>
      </IndicatorBar>

      <Charts>
        <Column>
          <PriceChart />
          <VolumeBar>
            <Chip>
              成交量
              <Caret $w={14} $h={11} $color="#666" $ml={10} />
            </Chip>
            <VolumeReadings>
              <Reading $color={c.text} $gap={2}>
                110.3万
                <Arrow w={9} h={22} />
              </Reading>
              <Reading $color="#e5c25c" $gap={2}>
                MA1:89.13万
                <Arrow w={9} h={22} />
              </Reading>
              <Reading $color={c.violet} $gap={2}>
                MA2:112.4万
                <Arrow down w={9} h={22} />
              </Reading>
              <Reading $color={c.green} $gap={2}>
                MA3:114.4万
                <Arrow w={9} h={22} />
              </Reading>
              <Reading $color="#808080">虚拟成交量:139.7万</Reading>
            </VolumeReadings>
            <Expand aria-label="展开">
              <svg width="16" height="26" viewBox="0 0 16 26" fill="none" stroke="#fff" strokeWidth="4" strokeLinecap="round">
                <path d="M3 2l10 11L3 24" />
              </svg>
            </Expand>
          </VolumeBar>
          <VolumeChart />
          <DateRow>
            <span>20250729</span>
            <span>20251028</span>
          </DateRow>
        </Column>
        <Column>
          <ChipChart />
          <Legend>
            <LegendItem>
              <Swatch $color="#74b657" />
              套牢
            </LegendItem>
            <LegendItem>
              <Swatch $color="#d7564f" />
              获利
            </LegendItem>
          </Legend>
          <Costs>
            {costs.map(([k, v]) => (
              <CostRow key={k}>
                <dt>{k}</dt>
                <dd>{v}</dd>
              </CostRow>
            ))}
          </Costs>
          <CostFoot>
            <Explain>
              说明
              <svg width="34" height="34" viewBox="0 0 34 34">
                <circle cx="17" cy="17" r="17" fill="#c9c9c9" />
                <circle cx="17" cy="10" r="2.500" fill="#fff" />
                <path d="M17 15v11" stroke="#fff" strokeWidth="4" fill="none" />
              </svg>
            </Explain>
            <span>2025-10-28</span>
          </CostFoot>
        </Column>
      </Charts>

      <Promo>
        <HornIcon />
        <PromoLink href="#finance">正规融资平台，安全有保障，点我查看&gt;&gt;</PromoLink>
        <PromoClose aria-label="关闭推广">
          <CloseIcon size={28} color={c.orange} />
        </PromoClose>
      </Promo>

      <Tabs $info>
        {infoTabs.map((t) => (
          <Tab key={t} $active={t === "股吧"}>
            {t}
          </Tab>
        ))}
      </Tabs>

      <Cards>
        <Card>
          <CardArt width="250" height="176" viewBox="0 0 250 176">
            <path d="M50 176V0h200v176zM8 28h42v148H8z" fill="#f6dedb" fillOpacity="0.2" />
            <path d="M97 22h124v154H97z" fill="#fef7f5" />
            <path d="M121 46h74l3 126h-77zM70 88h36v84H70zM212 110h34v62h-34z" fill="#f7e0de" fillOpacity="0.4" />
            <text x="158" y="128" fontSize="58" fontWeight="900" textAnchor="middle" fill="#fef7f5" fontFamily="Roboto, sans-serif">
              1
            </text>
          </CardArt>
          <CardTitle>
            <RankIcon />
            人气榜
            <ChevronIcon />
          </CardTitle>
          <CardText $top={15}>
            A股市场排名第<Strong>94</Strong>名
          </CardText>
          <CardText $top={10}>
            较昨日
            <UpIcon />
            <Strong>112</Strong>名
          </CardText>
        </Card>
        <Card>
          <CardArt width="230" height="176" viewBox="0 0 230 176">
            <path d="M0 0h230v100H8z" fill="#f8dfdc" fillOpacity="0.3" />
            <text x="138" y="120" fontSize="116" fontWeight="900" fontStyle="italic" textAnchor="middle" fill="#f8e3e1" stroke="#fdf4f2" strokeWidth="4" fontFamily="Roboto, sans-serif">
              VS
            </text>
          </CardArt>
          <CardTitle>
            <VsIcon />
            多空看盘
          </CardTitle>
          <Vote>
            <VoteSide $up>
              <VoteDisc>
                <TriangleIcon />
              </VoteDisc>
              <VoteText>
                看涨
                <VoteShare>**%</VoteShare>
              </VoteText>
            </VoteSide>
            <VoteSide>
              <VoteDisc>
                <TriangleIcon down />
              </VoteDisc>
              <VoteText>
                看跌
                <VoteShare>**%</VoteShare>
              </VoteText>
            </VoteSide>
          </Vote>
        </Card>
      </Cards>

      <TradeBar>
        <IndexBox>
          <IndexTop>
            <Caret $up $w={18} $h={6} $color="#7a7a7a" />
            <IndexValue>4006.53</IndexValue>
          </IndexTop>
          <IndexRow>
            上证
            <IndexChange>0.24%</IndexChange>
          </IndexRow>
        </IndexBox>
        <TradeButton>买</TradeButton>
        <TradeButton $sell>卖</TradeButton>
        <Tools>
          <Tool>
            <ToolIcon>撤</ToolIcon>
            撤单
          </Tool>
          <Tool>
            <ToolIcon>
              <HexIcon />
            </ToolIcon>
            设自选
          </Tool>
          <Tool>
            <ToolIcon>
              <DotsIcon size={41} r={4} fill="#2b2b2b" />
            </ToolIcon>
            更多
          </Tool>
        </Tools>
      </TradeBar>

      <SystemNav>
        <button aria-label="最近任务">
          <svg width="37" height="38" viewBox="0 0 37 38" stroke="#7a7a7a" strokeWidth="5" strokeLinecap="round">
            <path d="M3 4h31M3 19h31M3 34h31" />
          </svg>
        </button>
        <button aria-label="主屏幕">
          <svg width="39" height="40" viewBox="0 0 39 40" fill="none" stroke="#7a7a7a" strokeWidth="4">
            <rect x="2" y="2" width="35" height="36" rx="8" />
          </svg>
        </button>
        <button aria-label="系统返回">
          <svg width="24" height="40" viewBox="0 0 24 40" fill="none" stroke="#7a7a7a" strokeWidth="4" strokeLinecap="round">
            <path d="M22 2L4 18q-2 2 0 4l18 16" />
          </svg>
        </button>
      </SystemNav>
    </Page>
  );
}
